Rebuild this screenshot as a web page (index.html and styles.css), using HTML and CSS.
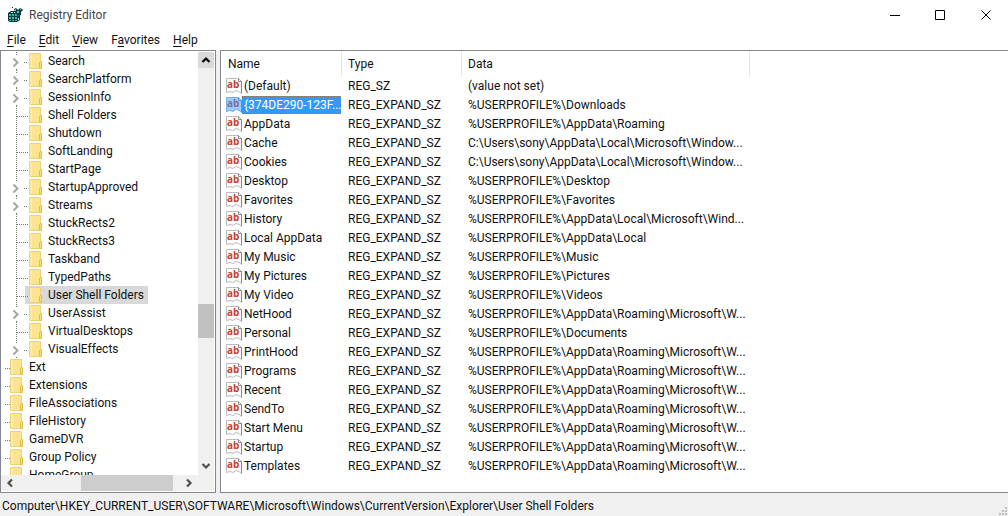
FILE: index.html
```html
<!DOCTYPE html>
<html lang="en">
<head>
  <meta charset="UTF-8" />
  <meta name="viewport" content="width=device-width, initial-scale=1.0" />
  <title>Registry Editor</title>
  <link rel="stylesheet" href="styles.css">
</head>
<body>
  <!-- Shared icons -->
  <svg class="sprite" aria-hidden="true">
    <symbol id="folder" viewBox="0 0 13 16">
      <path d="M0.5 0.5H11.5V8.5H12.5V15.5H0.5Z" fill="#fbe38f" stroke="#ecd27a" />
      <path d="M1 1H3V15H1Z" fill="#fdeaa6" />
      <path d="M10.5 15V9.5L11.5 8.5H12.5V15.5H10.5Z" fill="#f8df6c" stroke="#dfc04e" />
    </symbol>
    <symbol id="leaf-guide" viewBox="0 0 24 18">
      <path d="M15.5 0V18" stroke="#777" stroke-dasharray="1 1" />
      <path d="M16 10.5H27" stroke="#777" stroke-dasharray="1 1" />
    </symbol>
    <symbol id="branch-guide" viewBox="0 0 24 18">
      <path d="M15.5 0V3M15.5 17V18M23 10.5H27" stroke="#777" stroke-dasharray="1 1" />
      <path d="M12.5 6.5L16.5 10.5L12.5 14.5" fill="none" stroke="#a6a6a6" stroke-width="2" />
    </symbol>
    <symbol id="root-guide" viewBox="0 0 5 18">
      <path d="M4 10.5H9" stroke="#777" stroke-dasharray="1 1" />
    </symbol>
    <symbol id="arrow" viewBox="0 0 16 16">
      <path d="M4.5 10L8 6.5L11.5 10" fill="none" stroke="currentColor" stroke-width="2.2" />
    </symbol>
  </svg>

  <header class="titlebar">
    <svg class="app-icon" width="16" height="16" viewBox="0 0 16 16" aria-hidden="true">
      <path d="M1 6L4 4H11L13 6V13L10 15H3L1 14Z" fill="#0b3b3d" />
      <path d="M2 7H4V9H2ZM5 7H7V9H5ZM8 7H10V9H8ZM2 10H4V12H2ZM5 10H7V12H5ZM8 10H10V12H8ZM2 13H4V14H2ZM5 13H7V14H5ZM8 13H10V14H8Z" fill="#35b9b0" />
      <path d="M4 5H6V6H4ZM7 5H9V6H7ZM11 7H12V9H11ZM11 11H12V13H11Z" fill="#a4eee5" />
      <path d="M7 2L9 1L11 3L13 1L15 2L16 3L14 5V8L12 9L9 7L8 5Z" fill="#123c40" />
      <path d="M8 2H9V4H8ZM10 4H12V6H10ZM13 2H14V3H13Z" fill="#48c4bd" />
      <path d="M5 0H6V1H5Z" fill="#061f20" />
    </svg>
    <h1>Registry Editor</h1>
    <div class="window-buttons">
      <button type="button" aria-label="Minimize">
        <svg width="11" height="11" viewBox="0 0 11 11"><path d="M0 5.5H10" /></svg>
      </button>
      <button type="button" aria-label="Maximize">
        <svg width="11" height="11" viewBox="0 0 11 11"><path d="M0.5 0.5H9.5V9.5H0.5Z" /></svg>
      </button>
      <button type="button" aria-label="Close">
        <svg width="11" height="11" viewBox="0 0 11 11"><path d="M1.5 0.5L10.5 9.5M10.5 0.5L1.5 9.5" /></svg>
      </button>
    </div>
  </header>

  <nav class="menubar">
    <button type="button"><u>F</u>ile</button>
    <button type="button"><u>E</u>dit</button>
    <button type="button"><u>V</u>iew</button>
    <button type="button">F<u>a</u>vorites</button>
    <button type="button"><u>H</u>elp</button>
  </nav>

  <main class="panes">
    <section class="tree-pane">
      <ul class="tree" id="tree"></ul>
      <div class="scrollbar vertical">
        <button type="button" class="hover" aria-label="Scroll up"><svg class="up"><use href="#arrow" /></svg></button>
        <div class="track"><div class="thumb"></div></div>
        <button type="button" aria-label="Scroll down"><svg class="down"><use href="#arrow" /></svg></button>
      </div>
      <div class="scrollbar horizontal">
        <button type="button" aria-label="Scroll left"><svg class="left"><use href="#arrow" /></svg></button>
        <div class="track"><div class="thumb"></div></div>
        <button type="button" aria-label="Scroll right"><svg class="right"><use href="#arrow" /></svg></button>
      </div>
    </section>

    <section class="value-pane">
      <table class="values">
        <thead>
          <tr>
            <th class="col-name">Name</th>
            <th class="col-type">Type</th>
            <th class="col-data">Data</th>
          </tr>
        </thead>
        <tbody id="values"></tbody>
      </table>
    </section>
  </main>

  <footer class="statusbar">
    <span>Computer\HKEY_CURRENT_USER\SOFTWARE\Microsoft\Windows\CurrentVersion\Explorer\User Shell Folders</span>
    <svg class="grip" width="10" height="10" viewBox="0 0 10 10" aria-hidden="true">
      <path d="M7 1H9V3H7ZM4 4H6V6H4ZM7 4H9V6H7ZM1 7H3V9H1ZM4 7H6V9H4ZM7 7H9V9H7Z" fill="#bdbdbd" />
    </svg>
  </footer>

  <script src="script.js"></script>
</body>
</html>
```
FILE: styles.css
```css
* {
  box-sizing: border-box;
}
body {
  margin: 0;
  height: 100vh;
  display: flex;
  flex-direction: column;
  overflow: hidden;
  background: #f0f0f0;
  color: #111;
  font-family: Roboto, "Open Sans", sans-serif;
  font-size: 12px;
  line-height: 18px;
}
button {
  padding: 0;
  border: 0;
  background: none;
  color: inherit;
  font: inherit;
}
svg {
  display: block;
  flex: none;
}
.sprite {
  position: absolute;
  width: 0;
  height: 0;
}

/* Title bar and menu */
.titlebar {
  display: flex;
  align-items: center;
  flex: none;
  height: 30px;
  padding-left: 7px;
  background: #fff;
}
.titlebar h1 {
  flex: 1;
  margin: 0 0 0 6px;
  font-size: 12px;
  font-weight: normal;
  color: #444;
}
.window-buttons {
  display: flex;
}
.window-buttons button {
  display: flex;
  align-items: center;
  justify-content: center;
  width: 45px;
  height: 28px;
}
.window-buttons path {
  fill: none;
  stroke: #000;
}
.menubar {
  display: flex;
  gap: 13px;
  flex: none;
  height: 20px;
  padding: 1px 7px;
  background: #fff;
}
.menubar u {
  text-underline-offset: 2px;
}

/* Panes */
.panes {
  display: flex;
  gap: 4px;
  flex: 1;
  min-height: 0;
}
.tree-pane,
.value-pane {
  border: 1px solid #828790;
  background: #fff;
  overflow: hidden;
}
.tree-pane {
  display: grid;
  grid-template-columns: 1fr 16px;
  grid-template-rows: 1fr 16px;
  flex: none;
  width: 216px;
  padding: 1px 1px 1px 0;
}
.value-pane {
  flex: 1;
  border-right: 0;
}

/* Key tree */
.tree {
  margin: 0;
  padding: 0;
  min-height: 0;
  list-style: none;
  overflow: hidden;
}
.tree li {
  display: flex;
  height: 18px;
}
.guide {
  position: relative;
  width: 24px;
  height: 18px;
  overflow: visible;
}
.guide.root {
  width: 5px;
}
.sprite symbol {
  overflow: visible;
}
.node {
  display: flex;
  align-items: center;
  gap: 6px;
  padding: 0 4px;
  white-space: nowrap;
}
.node svg {
  width: 13px;
  height: 16px;
}
.selected .node {
  background: #d9d9d9;
}

/* Scrollbars */
.scrollbar {
  display: flex;
  background: #f0f0f0;
  color: #505050;
}
.scrollbar.vertical {
  flex-direction: column;
  padding-bottom: 1px;
}
.scrollbar.horizontal {
  grid-column: 1 / 3;
  padding: 0 17px 0 1px;
}
.scrollbar button,
.scrollbar svg {
  width: 16px;
  height: 16px;
}
.scrollbar .hover {
  background: #dadada;
  color: #000;
}
.scrollbar .down {
  transform: rotate(180deg);
}
.scrollbar .left {
  transform: rotate(-90deg);
}
.scrollbar .right {
  transform: rotate(90deg);
}
.track {
  flex: 1;
  display: flex;
}
.vertical .track {
  flex-direction: column;
  justify-content: flex-end;
}
.thumb {
  background: #c1c1c1;
}
.vertical .thumb {
  height: 34px;
  margin-bottom: 120px;
}
.horizontal .thumb {
  width: 92px;
  margin-left: 63px;
  background: #cdcdcd;
}

/* Value list */
.values {
  width: 529px;
  table-layout: fixed;
  border-collapse: separate;
  border-spacing: 0;
}
.values th,
.values td {
  padding: 0 0 0 7px;
  text-align: left;
  font-weight: normal;
  white-space: nowrap;
}
.values th {
  height: 25px;
}
.values .col-type,
.values .col-data {
  padding-left: 6px;
  border-left: 1px solid #e5e5e5;
}
.values .col-data {
  border-right: 1px solid #e5e5e5;
}
.values td {
  height: 19px;
}
.col-name,
.col-type {
  width: 120px;
}
.values .name {
  padding-left: 5px;
}
.value-name {
  display: flex;
  height: 19px;
  align-items: center;
}
.value-name svg {
  width: 16px;
  height: 16px;
}
.value-name span {
  flex: 1;
  min-width: 0;
  padding-left: 2px;
}
.sheet {
  fill: #fff;
  stroke: #bbb;
}
.fold {
  fill: none;
  stroke: #888;
}
.glyph {
  font-family: "Open Sans", sans-serif;
  font-size: 10px;
  font-weight: bold;
  fill: #c8432b;
}
.selected .value-name span {
  background: #3399ff;
  color: #fff;
  outline: 1px dotted #8a7a6a;
  outline-offset: -1px;
}
.selected .sheet {
  fill: #99ccff;
  stroke: #7ab0ea;
}
.selected .fold {
  stroke: #5a8fc8;
}
.selected .glyph {
  fill: #7d6f95;
}

/* Status bar */
.statusbar {
  display: flex;
  align-items: center;
  justify-content: space-between;
  flex: none;
  height: 23px;
  padding-left: 2px;
  padding-top: 2px;
  white-space: nowrap;
}
.grip {
  align-self: flex-end;
}
```
FILE: script.js
```javascript
// Keys in the tree: name and kind of guide line
const keys = [
  ['Search', 'branch'],
  ['SearchPlatform', 'branch'],
  ['SessionInfo', 'branch'],
  ['Shell Folders', 'leaf'],
  ['Shutdown', 'leaf'],
  ['SoftLanding', 'leaf'],
  ['StartPage', 'leaf'],
  ['StartupApproved', 'branch'],
  ['Streams', 'branch'],
  ['StuckRects2', 'leaf'],
  ['StuckRects3', 'leaf'],
  ['Taskband', 'leaf'],
  ['TypedPaths', 'leaf'],
  ['User Shell Folders', 'leaf'],
  ['UserAssist', 'branch'],
  ['VirtualDesktops', 'leaf'],
  ['VisualEffects', 'branch'],
  ['Ext', 'root'],
  ['Extensions', 'root'],
  ['FileAssociations', 'root'],
  ['FileHistory', 'root'],
  ['GameDVR', 'root'],
  ['Group Policy', 'root'],
  ['HomeGroup', 'root']
];

// Values of the selected key
const values = [
  ['(Default)', '(value not set)'],
  ['{374DE290-123F...', '%USERPROFILE%\\Downloads'],
  ['AppData', '%USERPROFILE%\\AppData\\Roaming'],
  ['Cache', 'C:\\Users\\sony\\AppData\\Local\\Microsoft\\Window...'],
  ['Cookies', 'C:\\Users\\sony\\AppData\\Local\\Microsoft\\Window...'],
  ['Desktop', '%USERPROFILE%\\Desktop'],
  ['Favorites', '%USERPROFILE%\\Favorites'],
  ['History', '%USERPROFILE%\\AppData\\Local\\Microsoft\\Wind...'],
  ['Local AppData', '%USERPROFILE%\\AppData\\Local'],
  ['My Music', '%USERPROFILE%\\Music'],
  ['My Pictures', '%USERPROFILE%\\Pictures'],
  ['My Video', '%USERPROFILE%\\Videos'],
  ['NetHood', '%USERPROFILE%\\AppData\\Roaming\\Microsoft\\W...'],
  ['Personal', '%USERPROFILE%\\Documents'],
  ['PrintHood', '%USERPROFILE%\\AppData\\Roaming\\Microsoft\\W...'],
  ['Programs', '%USERPROFILE%\\AppData\\Roaming\\Microsoft\\W...'],
  ['Recent', '%USERPROFILE%\\AppData\\Roaming\\Microsoft\\W...'],
  ['SendTo', '%USERPROFILE%\\AppData\\Roaming\\Microsoft\\W...'],
  ['Start Menu', '%USERPROFILE%\\AppData\\Roaming\\Microsoft\\W...'],
  ['Startup', '%USERPROFILE%\\AppData\\Roaming\\Microsoft\\W...'],
  ['Templates', '%USERPROFILE%\\AppData\\Roaming\\Microsoft\\W...']
];

const stringIcon = `
  <svg viewBox="0 0 16 16" aria-hidden="true">
    <path class="sheet" d="M0.5 0.5H12.5L15.5 3.5V15.5L13 13.5L10 12.5L7 14.5L4 13.5L0.5 14.5Z" />
    <path class="fold" d="M12.5 0.5V3.5H15.5V15" />
    <text class="glyph" x="1" y="10">ab</text>
  </svg>`;

document.getElementById('tree').innerHTML = keys.map(([name, kind]) => `
  <li class="${name === 'User Shell Folders' ? 'selected' : ''}">
    <svg class="guide ${kind}"><use href="#${kind}-guide" /></svg>
    <span class="node"><svg><use href="#folder" /></svg>${name}</span>
  </li>`).join('');

document.getElementById('values').innerHTML = values.map(([name, data], i) => `
  <tr class="${i === 1 ? 'selected' : ''}">
    <td class="name"><div class="value-name">${stringIcon}<span>${name}</span></div></td>
    <td>${i === 0 ? 'REG_SZ' : 'REG_EXPAND_SZ'}</td>
    <td>${data}</td>
  </tr>`).join('');
```
